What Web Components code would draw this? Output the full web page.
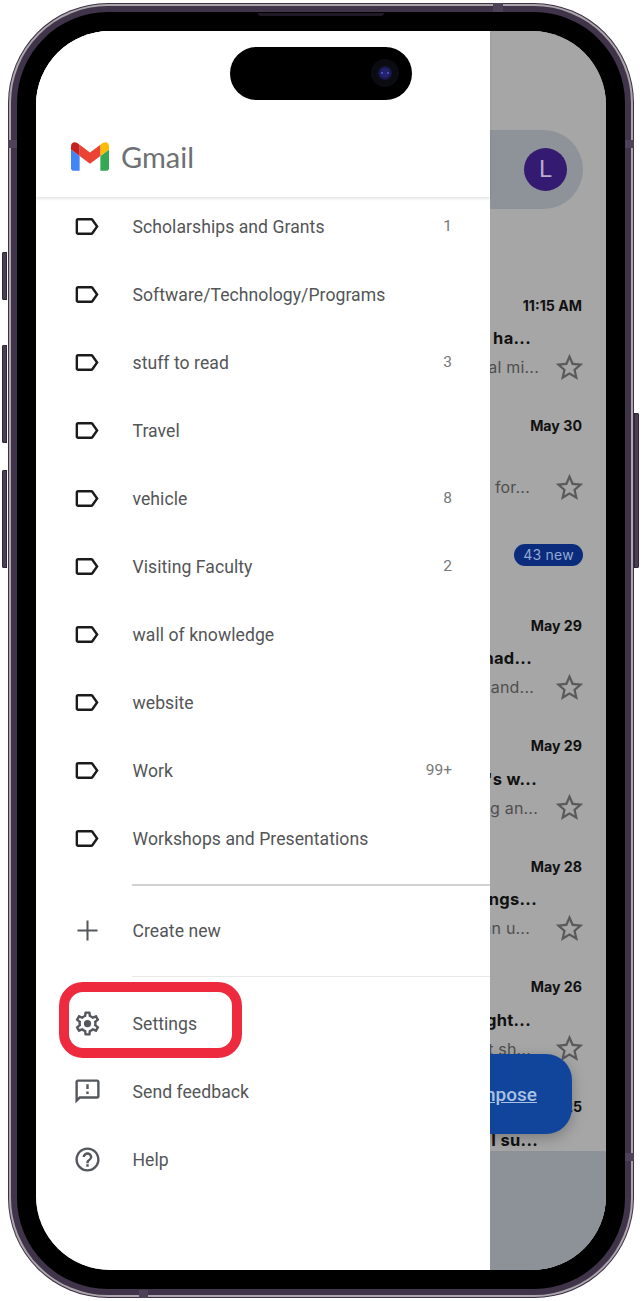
<!DOCTYPE html>
<html>
<head>
<meta charset="utf-8">
<style>
html,body{margin:0;padding:0;background:#fff;}
body{width:642px;height:1301px;overflow:hidden;font-family:Roboto,"Liberation Sans",sans-serif;}
</style>
</head>
<body>
<phone-frame>
	<drawer-panel slot="drawer">
		<drawer-row count="1" label="Scholarships and Grants" icon="label"></drawer-row>
		<drawer-row label="Software/Technology/Programs" icon="label"></drawer-row>
		<drawer-row count="3" label="stuff to read" icon="label"></drawer-row>
		<drawer-row label="Travel" icon="label"></drawer-row>
		<drawer-row count="8" label="vehicle" icon="label"></drawer-row>
		<drawer-row count="2" label="Visiting Faculty" icon="label"></drawer-row>
		<drawer-row label="wall of knowledge" icon="label"></drawer-row>
		<drawer-row label="website" icon="label"></drawer-row>
		<drawer-row count="99+" label="Work" icon="label"></drawer-row>
		<drawer-row label="Workshops and Presentations" icon="label"></drawer-row>
		<drawer-divider class="strong"></drawer-divider>
		<drawer-row label="Create new" icon="plus"></drawer-row>
		<drawer-divider></drawer-divider>
		<drawer-row label="Settings" icon="gear" highlight></drawer-row>
		<drawer-row label="Send feedback" icon="feedback"></drawer-row>
		<drawer-row label="Help" icon="help"></drawer-row>
	</drawer-panel>
	<inbox-peek slot="main">
		<mail-peek date="11:15 AM" subject="ha..." subject-end="75" snippet="al mi..." snippet-end="67" star></mail-peek>
		<mail-peek style="height:130px" date="May 30" snippet="for..." snippet-end="76" star></mail-peek>
		<mail-peek style="height:70px" badge="43 new" snippet="." snippet-end="115" compact></mail-peek>
		<mail-peek date="May 29" subject="had..." subject-end="74" snippet="and..." snippet-end="72" star></mail-peek>
		<mail-peek date="May 29" subject="'s w..." subject-end="69" snippet="g an..." snippet-end="68" star></mail-peek>
		<mail-peek date="May 28" subject="ngs..." subject-end="69" snippet="an u..." snippet-end="76" star></mail-peek>
		<mail-peek date="May 26" subject="ght..." subject-end="75" snippet="t sh..." snippet-end="75" star></mail-peek>
		<mail-peek date="May 25" subject="I su..." subject-end="68"></mail-peek>
	</inbox-peek>
</phone-frame>
<script>
const ICONS={
	label:'<path d="M17.63 5.84C17.27 5.33 16.67 5 16 5L5 5.01C3.9 5.01 3 5.9 3 7v10c0 1.1.9 1.99 2 1.99L16 19c.67 0 1.27-.33 1.63-.84L22 12l-4.37-6.16zM16 17H5V7h11l3.55 5L16 17z"/>',
	plus:'<path d="M11.15 3.7h1.7v7.45h7.45v1.7h-7.45v7.45h-1.7v-7.45H3.7v-1.7h7.45z"/>',
	gear:'<path d="M19.43 12.98c.04-.32.07-.64.07-.98 0-.34-.03-.66-.07-.98l2.11-1.65c.19-.15.24-.42.12-.64l-2-3.46c-.09-.16-.26-.25-.44-.25-.06 0-.12.01-.17.03l-2.49 1c-.52-.4-1.08-.73-1.69-.98l-.38-2.65C14.46 2.18 14.25 2 14 2h-4c-.25 0-.46.18-.49.42l-.38 2.65c-.61.25-1.17.59-1.69.98l-2.49-1c-.06-.02-.12-.03-.18-.03-.17 0-.34.09-.43.25l-2 3.46c-.13.22-.07.49.12.64l2.11 1.65c-.04.32-.07.65-.07.98 0 .33.03.66.07.98l-2.11 1.65c-.19.15-.24.42-.12.64l2 3.46c.09.16.26.25.44.25.06 0 .12-.01.17-.03l2.49-1c.52.4 1.08.73 1.69.98l.38 2.65c.03.24.24.42.49.42h4c.25 0 .46-.18.49-.42l.38-2.65c.61-.25 1.17-.59 1.69-.98l2.49 1c.06.02.12.03.18.03.17 0 .34-.09.43-.25l2-3.46c.12-.22.07-.49-.12-.64l-2.11-1.65zm-1.98-1.71c.04.31.05.52.05.73 0 .21-.02.43-.05.73l-.14 1.13.89.7 1.08.84-.7 1.21-1.27-.51-1.04-.42-.9.68c-.43.32-.84.56-1.25.73l-1.06.43-.16 1.13-.2 1.35h-1.4l-.19-1.35-.16-1.13-1.06-.43c-.43-.18-.83-.41-1.23-.71l-.91-.7-1.06.43-1.27.51-.7-1.21 1.08-.84.89-.7-.14-1.13c-.03-.31-.05-.54-.05-.74s.02-.43.05-.73l.14-1.13-.89-.7-1.08-.84.7-1.21 1.27.51 1.04.42.9-.68c.43-.32.84-.56 1.25-.73l1.06-.43.16-1.13.2-1.35h1.39l.19 1.35.16 1.13 1.06.43c.43.18.83.41 1.23.71l.91.7 1.06-.43 1.27-.51.7 1.21-1.07.85-.89.7.14 1.13z"/><circle cx="12" cy="12" r="3"/>',
	feedback:'<path d="M20 2H4c-1.1 0-1.99.9-1.99 2L2 22l4-4h14c1.1 0 2-.9 2-2V4c0-1.1-.9-2-2-2zm0 14H5.17L4 17.17V4h16v12zM11 12h2v2h-2zm0-6h2v4h-2z"/>',
	help:'<path d="M11 18h2v-2h-2v2zm1-16C6.48 2 2 6.48 2 12s4.48 10 10 10 10-4.48 10-10S17.52 2 12 2zm0 18c-4.41 0-8-3.59-8-8s3.59-8 8-8 8 3.59 8 8-3.59 8-8 8zm0-14c-2.21 0-4 1.79-4 4h2c0-1.1.9-2 2-2s2 .9 2 2c0 2-3 1.75-3 5h2c0-2.25 3-2.5 3-5 0-2.21-1.79-4-4-4z"/>'
};
const STAR='M22 9.24l-7.19-.62L12 2 9.19 8.63 2 9.24l5.46 4.73L5.82 21 12 17.27 18.18 21l-1.63-7.03L22 9.24zM12 15.4l-3.76 2.27 1-4.28-3.32-2.88 4.38-.38L12 6.1l1.71 4.04 4.38.38-3.32 2.88 1 4.28L12 15.4z';

class PhoneFrame extends HTMLElement{
	constructor(){
		super();
		let shadowRoot=this.attachShadow({mode:'open'});
		shadowRoot.innerHTML=`
<style>
:host{display:block;position:relative;width:626px;height:1295px;margin:3px 0 0 8px;}
.rim{height:100%;box-sizing:border-box;padding:1px;border-radius:100px;background:#3b3046;}
.steel{height:100%;box-sizing:border-box;padding:2px;border-radius:99px;background:#aca6aa;}
.band{height:100%;box-sizing:border-box;padding:6px;border-radius:97px;background:#3f3449;}
.bezel{height:100%;box-sizing:border-box;padding:19px;border-radius:91px;background:#000;}
.screen{display:flex;height:100%;border-radius:74px;overflow:hidden;background:#a6a6a6;position:relative;}
.drawer{width:454px;flex:none;position:relative;z-index:2;background:#fff;}
.main{flex:1;min-width:0;}
.island{position:absolute;z-index:3;left:222px;top:44px;width:182px;height:53px;border-radius:27px;background:#000;}
.cam{position:absolute;left:141px;top:12px;width:28px;height:28px;border-radius:50%;background:#0b0b12;}
.cam i{position:absolute;left:7px;top:7px;width:14px;height:14px;border-radius:50%;background:radial-gradient(circle,#23236e 35%,#0e0e30 80%);}
.cam b{position:absolute;left:10px;top:13px;width:2px;height:2px;border-radius:50%;background:#5a5ad8;box-shadow:6px 0 0 #5a5ad8;}
.speaker{position:absolute;z-index:3;left:250px;top:10px;width:126px;height:3px;border-radius:0 0 3px 3px;background:#1f1a26;}
.btn{position:absolute;width:5px;background:#4a3f55;box-shadow:inset 0 0 0 1px #2e2637;}
.left{left:-6px;border-radius:2px 0 0 2px;}
.right{right:-5px;border-radius:0 2px 2px 0;}
.notch{position:absolute;background:#4d4258;}
</style>
<div class="rim"><div class="steel"><div class="band"><div class="bezel">
	<div class="screen">
		<div class="drawer"><slot name="drawer"></slot></div>
		<div class="main"><slot name="main"></slot></div>
	</div>
</div></div></div></div>
<div class="island"><div class="cam"><i></i><b></b></div></div>
<div class="speaker"></div>
<div class="btn left" style="top:249px;height:48px"></div>
<div class="btn left" style="top:342px;height:98px"></div>
<div class="btn left" style="top:467px;height:98px"></div>
<div class="btn right" style="top:410px;height:155px"></div>
<div class="notch" style="left:485px;top:0;width:10px;height:9px"></div>
<div class="notch" style="left:0;top:137px;width:9px;height:8px"></div>
<div class="notch" style="right:0;top:137px;width:9px;height:8px"></div>
<div class="notch" style="left:131px;bottom:0;width:9px;height:8px"></div>
<div class="notch" style="right:0;top:1150px;width:9px;height:8px"></div>
`;
	}
}
customElements.define('phone-frame',PhoneFrame);

class DrawerPanel extends HTMLElement{
	constructor(){
		super();
		let shadowRoot=this.attachShadow({mode:'open'});
		shadowRoot.innerHTML=`
<style>
:host{display:block;}
header{display:flex;align-items:flex-start;gap:12px;box-sizing:border-box;height:166px;padding:92px 0 0 35px;box-shadow:0 2px 3px rgba(0,0,0,.1);position:relative;z-index:1;background:#fff;}
header svg{width:38px;height:29px;margin-top:19px;}
.word{font:400 29px/1 Lato,"Open Sans",sans-serif;color:#6d7074;margin-top:19px;}
.list{margin-top:-5px;}
</style>
<header>
	<svg viewBox="52 42 88 66"><path fill="#4285f4" d="M58 108h14V74L52 59v43c0 3.32 2.69 6 6 6"/><path fill="#34a853" d="M120 108h14c3.32 0 6-2.69 6-6V59l-20 15"/><path fill="#fbbc04" d="M120 48v26l20-15v-8c0-7.42-8.47-11.65-14.4-7.2"/><path fill="#ea4335" d="M72 74V48l24 18 24-18v26L96 92"/><path fill="#c5221f" d="M52 51v8l20 15V48l-5.6-4.2c-5.94-4.45-14.4-.22-14.4 7.2"/></svg>
	<span class="word">Gmail</span>
</header>
<div class="list"><slot></slot></div>
`;
	}
}
customElements.define('drawer-panel',DrawerPanel);

class DrawerRow extends HTMLElement{
	constructor(){
		super();
		let shadowRoot=this.attachShadow({mode:'open'});
		let icon=this.getAttribute('icon');
		let isLabel=icon=='label';
		let count=this.getAttribute('count')||'';
		shadowRoot.innerHTML=`
<style>
:host{display:flex;align-items:center;height:68px;position:relative;box-sizing:border-box;padding:0 38px 0 0;font-family:Roboto,sans-serif;}
.ico{width:96px;flex:none;display:flex;justify-content:center;}
svg{width:29px;height:29px;fill:${isLabel?'#1b1b1b':'#54585c'};margin-left:${isLabel?4:6}px;}
.text{flex:1;font-size:17.6px;color:#535557;letter-spacing:.05px;white-space:nowrap;padding:1px 0 0 .5px;}
.count{font-size:15.5px;color:#777779;}
.mark{position:absolute;left:23px;top:-7px;width:183px;height:76px;box-sizing:border-box;border:10px solid #ee2a3f;border-radius:24px;}
</style>
<div class="ico"><svg viewBox="0 0 24 24">${ICONS[icon]}</svg></div>
<span class="text">${this.getAttribute('label')}</span>
<span class="count">${count}</span>
${this.hasAttribute('highlight')?'<div class="mark"></div>':''}
`;
	}
}
customElements.define('drawer-row',DrawerRow);

class DrawerDivider extends HTMLElement{
	constructor(){
		super();
		let shadowRoot=this.attachShadow({mode:'open'});
		shadowRoot.innerHTML=`
<style>
:host{display:block;margin:12px 0 12px 96px;height:1px;background:#e8e8e8;}
:host(.strong){height:2px;margin-bottom:10px;background:#d2d2d2;}
</style>
`;
	}
}
customElements.define('drawer-divider',DrawerDivider);

class InboxPeek extends HTMLElement{
	constructor(){
		super();
		let shadowRoot=this.attachShadow({mode:'open'});
		shadowRoot.innerHTML=`
<style>
:host{display:flex;flex-direction:column;height:100%;position:relative;overflow:hidden;background:#a6a6a6;font-family:Inter,"Liberation Sans",sans-serif;}
.search{flex:none;margin-top:99px;height:79px;width:77px;border-radius:0 40px 40px 0;background:#8d9398;display:flex;align-items:center;justify-content:flex-end;padding-right:16px;}
.avatar{width:43px;height:43px;border-radius:50%;background:#341a70;color:#b7adc9;font:400 24px/43px Roboto,sans-serif;text-align:center;}
.list{flex:1;min-height:0;overflow:hidden;padding-top:84px;}
.nav{flex:none;height:119px;background:#8d9299;}
.fab{position:absolute;right:34px;top:1023px;width:120px;height:80px;border-radius:0 26px 26px 0;background:#11459c;box-shadow:0 4px 14px rgba(0,0,0,.25);display:flex;align-items:center;justify-content:flex-end;}
.fab span{font:500 19px/1 Roboto,sans-serif;color:#a9c1e2;text-decoration:underline;margin-right:35px;}
</style>
<div class="search"><div class="avatar">L</div></div>
<div class="list"><slot></slot></div>
<div class="nav"></div>
<div class="fab"><span>Compose</span></div>
`;
	}
}
customElements.define('inbox-peek',InboxPeek);

class MailPeek extends HTMLElement{
	constructor(){
		super();
		let shadowRoot=this.attachShadow({mode:'open'});
		let date=this.getAttribute('date')||'';
		let badge=this.getAttribute('badge');
		let subject=this.getAttribute('subject')||'';
		let snippet=this.getAttribute('snippet')||'';
		let compact=this.hasAttribute('compact');
		// the rows are cut by the drawer, so the texts are pinned by where they end
		let subjectEnd=this.getAttribute('subject-end')||0;
		let snippetEnd=this.getAttribute('snippet-end')||0;
		shadowRoot.innerHTML=`
<style>
:host{display:block;height:120.4px;box-sizing:border-box;position:relative;overflow:hidden;}
.date{display:flex;justify-content:flex-end;height:24px;align-items:center;padding-right:24px;font-size:14.2px;font-weight:700;color:#111;white-space:nowrap;}
.badge{font-size:14px;font-weight:400;letter-spacing:.25px;color:#93a8d2;background:#0b2c7c;border-radius:12px;padding:0 9px;line-height:22px;margin-right:-1px;}
.subject{display:flex;justify-content:flex-end;height:30px;margin-top:6px;line-height:30px;padding-right:${subjectEnd}px;font-size:16.5px;font-weight:700;letter-spacing:.3px;color:#111;white-space:nowrap;}
.snippet{position:relative;display:flex;justify-content:flex-end;align-items:center;height:28px;padding-right:${snippetEnd}px;font-size:16px;letter-spacing:.2px;color:#4f4f4f;white-space:nowrap;${compact?'margin-top:-15px;':''}}
svg{position:absolute;right:20px;top:-2.5px;width:33px;height:33px;fill:#5a5a5a;}
</style>
<div class="date">${badge?`<span class="badge">${badge}</span>`:date}</div>
${compact?'':`<div class="subject"><span>${subject}</span></div>`}
<div class="snippet"><span>${snippet}</span>${this.hasAttribute('star')?`<svg viewBox="0 0 24 24"><path d="${STAR}"/></svg>`:''}</div>
`;
	}
}
customElements.define('mail-peek',MailPeek);
</script>
</body>
</html>
